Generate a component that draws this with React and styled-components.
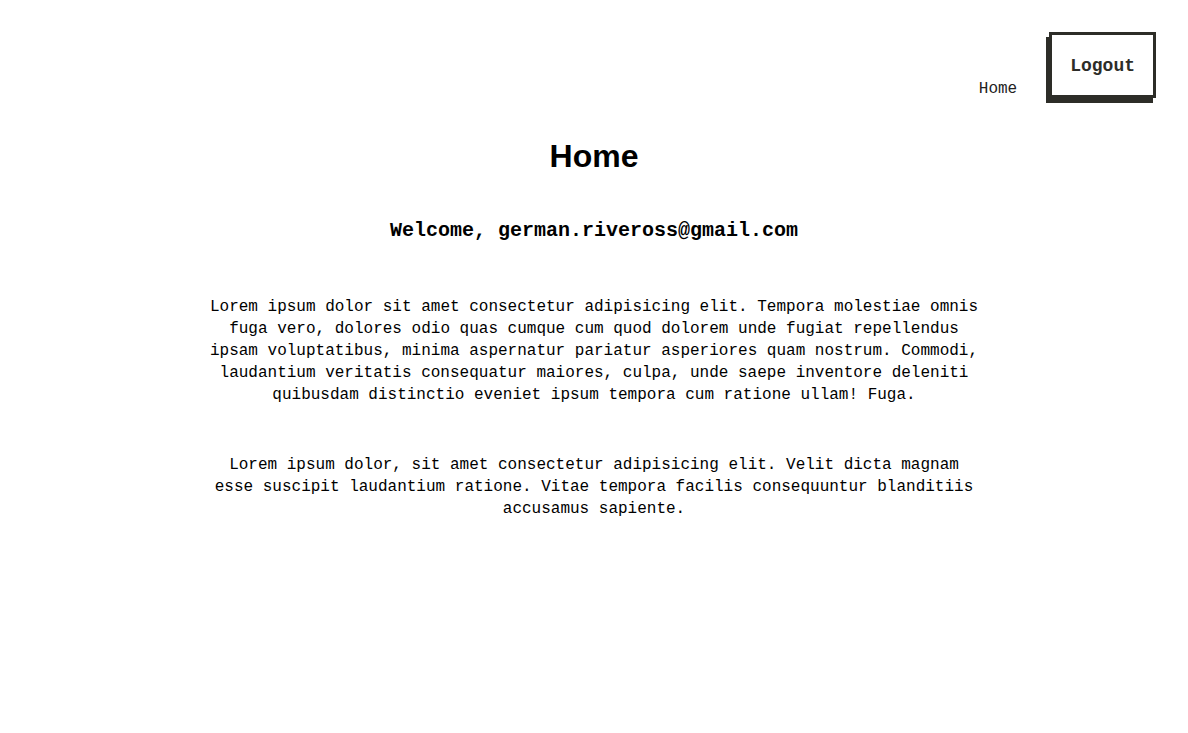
import React from 'react';
import styled, { createGlobalStyle } from 'styled-components';

const GlobalStyle = createGlobalStyle`
  body {
    margin: 0;
    background: #fff;
    color: #000;
    font-family: "Liberation Mono", "DejaVu Sans Mono", monospace;
  }
`;

const Nav = styled.nav`
  display: flex;
  justify-content: flex-end;
  align-items: flex-end;
  gap: 32px;
  padding: 32px 32px 0 0;
`;

const NavLink = styled.a`
  font-size: 16px;
  line-height: 22px;
  color: #222;
  text-decoration: none;
  cursor: pointer;
  position: relative;
  top: 2px;
`;

const LogoutButton = styled.button`
  font-family: "Liberation Mono", "DejaVu Sans Mono", monospace;
  font-size: 18px;
  font-weight: 700;
  line-height: 24px;
  color: #2d2d28;
  background: #fff;
  border: 3px solid #2d2d28;
  padding: 19px 18px 17px;
  box-shadow: -3px 5px 0 #2d2d28;
  cursor: pointer;
`;

const Main = styled.main`
  display: flex;
  flex-direction: column;
  align-items: center;
  text-align: center;
`;

const Title = styled.h1`
  font-family: "Liberation Sans", Arial, sans-serif;
  font-size: 32px;
  font-weight: 700;
  line-height: 40px;
  margin: 38px 0 0;
`;

const Welcome = styled.h3`
  font-size: 20px;
  font-weight: 700;
  line-height: 26px;
  margin: 42px 0 0;
`;

const Paragraph = styled.p`
  width: 770px;
  font-size: 16px;
  line-height: 22px;
  margin: ${(p) => p.$top}px 0 0;
`;

export default function App() {
  return (
    <>
      <GlobalStyle />
      <Nav>
        <NavLink>Home</NavLink>
        <LogoutButton>Logout</LogoutButton>
      </Nav>
      <Main>
        <Title>Home</Title>
        <Welcome>Welcome, german.riveross@gmail.com</Welcome>
        <Paragraph $top={52}>
          Lorem ipsum dolor sit amet consectetur adipisicing elit. Tempora molestiae omnis fuga vero, dolores odio quas cumque cum quod dolorem unde fugiat repellendus ipsam voluptatibus, minima aspernatur pariatur asperiores quam nostrum. Commodi, laudantium veritatis consequatur maiores, culpa, unde saepe inventore deleniti quibusdam distinctio eveniet ipsum tempora cum ratione ullam! Fuga.
        </Paragraph>
        <Paragraph $top={48}>
          Lorem ipsum dolor, sit amet consectetur adipisicing elit. Velit dicta magnam esse suscipit laudantium ratione. Vitae tempora facilis consequuntur blanditiis accusamus sapiente.
        </Paragraph>
      </Main>
    </>
  );
}
